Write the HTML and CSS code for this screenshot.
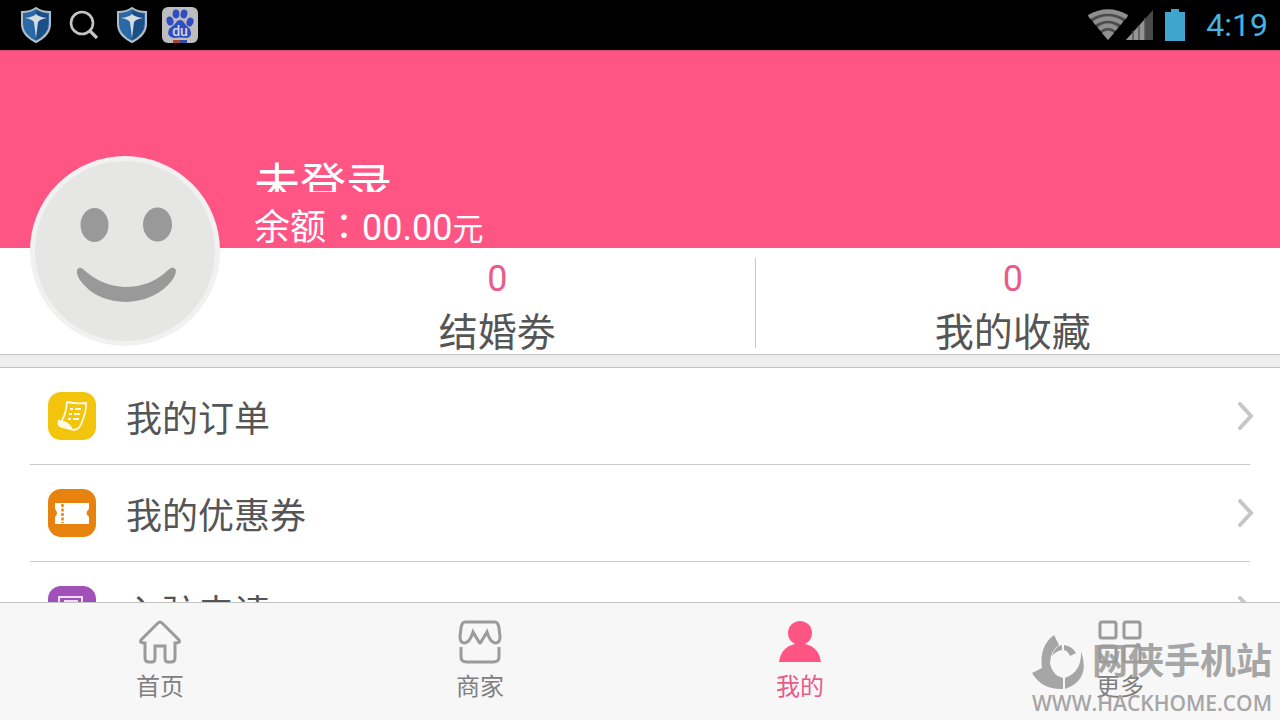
FILE: index.html
```html
<!DOCTYPE html>
<html lang="zh-CN">
  <head>
    <meta charset="UTF-8" />
    <meta name="viewport" content="width=device-width, initial-scale=1.0" />
    <title>我的</title>
    <link rel="stylesheet" href="styles.css">
  </head>
  <body>
    <svg class="defs" width="0" height="0" aria-hidden="true">
      <symbol id="shield" viewBox="0 0 30 36">
        <path d="M15 1 Q21 5 29 5 V17 Q29 28 15 35 Q1 28 1 17 V5 Q9 5 15 1Z" fill="#2a69a8" stroke="#b5bdc4" stroke-width="2" />
        <path d="M15 3 Q20 6 27 7 V17 Q27 27 15 33Z" fill="#1c4f88" />
        <path d="M4 11 Q12 10 15 7 Q18 10 26 11 Q19 12 17 15 L15 31 L13 15 Q11 12 4 11Z" fill="#d5dce2" />
      </symbol>
      <symbol id="arrow" viewBox="0 0 16 28">
        <path d="M2 2 L13 14 L2 26" fill="none" stroke="#c6c6c6" stroke-width="4" stroke-linecap="round" />
      </symbol>
    </svg>

    <header class="status">
      <div class="status-left">
        <svg width="30" height="36"><use href="#shield" /></svg>
        <svg width="30" height="30" viewBox="0 0 30 30" fill="none" stroke="#c4c4c4">
          <circle cx="13" cy="13" r="11" stroke-width="2.6" />
          <path d="M20 20 L28 28" stroke-width="3.2" />
        </svg>
        <svg width="30" height="36"><use href="#shield" /></svg>
        <svg width="36" height="36" viewBox="0 0 36 36">
          <rect width="36" height="36" rx="6" fill="#bdbdbf" />
          <g fill="#2f4fc0">
            <ellipse cx="8" cy="14" rx="3.4" ry="4.6" transform="rotate(-15 8 14)" />
            <ellipse cx="14" cy="7" rx="3.4" ry="4.4" />
            <ellipse cx="22" cy="7" rx="3.4" ry="4.4" transform="rotate(12 22 7)" />
            <ellipse cx="28" cy="15" rx="3.4" ry="4.4" transform="rotate(20 28 15)" />
            <path d="M18 13 Q21 13 23 17 L28 22 Q31 30 25 31 Q18 30 12 31 Q4 30 7 22 L13 17 Q15 13 18 13Z" />
          </g>
          <text class="paw-text" x="18" y="29" text-anchor="middle">du</text>
          <path d="M11 33 H18 V36 H11Z" fill="#b33c35" />
          <path d="M18 33 H25 V36 H18Z" fill="#2f4fa0" />
        </svg>
      </div>
      <div class="status-right">
        <svg width="66" height="32" viewBox="0 0 66 32">
          <path d="M0 7 Q20 -5 40 7 L20 31Z" fill="#4c4c4c" />
          <g fill="none" stroke="#8f8f8f" stroke-width="4.4">
            <path d="M1 8 Q20 -3 39 8" />
            <path d="M6 14 Q20 5 34 14" />
            <path d="M11 20 Q20 13 29 20" />
          </g>
          <path d="M14 24 Q20 19 26 24 L20 31Z" fill="#8f8f8f" />
          <path d="M38 31 L65 1 V31Z" fill="#4a4a4a" />
          <path d="M38 31 L57 10 V31Z" fill="#959595" />
          <path d="M45 22 V31 M51 16 V31 M57 9 V31" stroke="#555" stroke-width="1.5" />
        </svg>
        <svg width="22" height="32" viewBox="0 0 22 32">
          <path d="M7 0 H15 V3 H21 V32 H1 V3 H7Z" fill="#3fa5cf" />
        </svg>
        <time>4:19</time>
      </div>
    </header>

    <main>
      <section class="profile">
        <div class="hero">
          <h1>未登录</h1>
          <p>余额<span lang="zh-TW">：</span>00.00<small>元</small></p>
        </div>
        <svg class="avatar" viewBox="0 0 190 190">
          <circle cx="95" cy="95" r="92.5" fill="#e6e6e5" stroke="#f1f1f1" stroke-width="5" />
          <ellipse cx="64.5" cy="69" rx="14" ry="17" fill="#999" />
          <ellipse cx="127.5" cy="68.5" rx="14.5" ry="17" fill="#999" />
          <path d="M47 114 Q49 110 53 113 Q71 130 95 131 Q121 131 138 114 Q143 109 146 114 Q146 121 138 129 Q122 145 96 146 Q69 145 55 130 Q46 121 47 114Z" fill="#999" />
        </svg>
        <div class="stats">
          <a href="#"><span>0</span>结婚劵</a>
          <a href="#"><span>0</span>我的收藏</a>
        </div>
      </section>

      <ul class="menu">
        <li>
          <a href="#">
            <svg width="48" height="48" viewBox="0 0 48 48">
              <rect width="48" height="48" rx="13" fill="#f3c40c" />
              <g fill="none" stroke="#fffbe5" stroke-width="1.8">
                <path d="M14 28 Q18 22 19 10 Q28 12 38 11 Q39 17 34 30 Q31 38 26 38 L14 35 Q9 33 11 29 Q20 30 23 36 Q24 39 28 37" />
                <path d="M22 17 H25 M27 17 H33 M21 22 H24 M26 22 H32 M20 27 H23 M25 27 H31" />
              </g>
              <path d="M10 28 Q19 29 23 35 L22 37 L14 35 Q9 33 10 28Z" fill="#fffbe5" />
            </svg>
            <span>我的订单</span>
            <svg width="16" height="28"><use href="#arrow" /></svg>
          </a>
        </li>
        <li>
          <a href="#">
            <svg width="48" height="48" viewBox="0 0 48 48">
              <rect width="48" height="48" rx="13" fill="#e8820f" />
              <path d="M7 14 H41 V20 Q36 24 41 28 V35 H7 V28 Q11 24 7 20Z" fill="#fff" />
              <path d="M14.5 15 V34" stroke="#e8820f" stroke-width="2.5" stroke-dasharray="3 1.5" />
            </svg>
            <span>我的优惠券</span>
            <svg width="16" height="28"><use href="#arrow" /></svg>
          </a>
        </li>
        <li>
          <a href="#">
            <svg width="48" height="48" viewBox="0 0 48 48">
              <rect width="48" height="48" rx="13" fill="#a050b8" />
              <path d="M11 36 V11 H34 V36Z M17 20 V15 H29 V20" fill="none" stroke="#f0dcf5" stroke-width="2" />
            </svg>
            <span>入驻申请</span>
            <svg width="16" height="28"><use href="#arrow" /></svg>
          </a>
        </li>
      </ul>
    </main>

    <nav class="tabs">
      <a href="#">
        <svg width="44" height="44" viewBox="0 0 44 44">
          <path d="M20 3 Q22 1 24 3 L41 20 Q43 23 37 23 V38 Q37 42 33 42 H30 Q27 42 27 38 V26 H17 V38 Q17 42 14 42 H11 Q7 42 7 38 V23 Q1 23 3 20Z" />
        </svg>
        首页
      </a>
      <a href="#">
        <svg width="44" height="44" viewBox="0 0 44 44">
          <path d="M7 2 H37 Q40 2 41 8 L42 17 Q42 23 37 23 Q32 22 29 12 L23 22 Q22 24 21 22 L15 12 Q12 22 7 23 Q2 23 2 17 L3 8 Q4 2 7 2Z M3 27 V37 Q3 42 9 42 H35 Q41 42 41 37 V27" />
        </svg>
        商家
      </a>
      <a class="active" href="#">
        <svg width="44" height="44" viewBox="0 0 44 44">
          <circle cx="22" cy="13" r="12" />
          <path d="M1 42 Q3 27 17 24 H27 Q41 27 43 42Z" />
        </svg>
        我的
      </a>
      <a href="#">
        <svg width="44" height="44" viewBox="0 0 44 44">
          <rect x="2" y="2" width="16" height="16" rx="2" />
          <rect x="26" y="2" width="16" height="16" rx="2" />
          <rect x="2" y="26" width="16" height="16" rx="2" />
          <rect x="26" y="26" width="16" height="16" rx="2" />
        </svg>
        更多
      </a>
    </nav>

    <div class="watermark">
      <div class="brand">
        <svg width="52" height="56" viewBox="0 0 52 56">
          <path d="M22 1 L27 11 Q18 17 18 30 Q21 42 31 44 V55 Q10 56 0 39 L10 34 Q7 12 22 1Z" />
          <path d="M33 44 Q50 38 49 17 Q59 46 33 55Z" />
          <path d="M20 22 Q23 12 30 11 V16 Q24 17 20 22Z M32 11 Q40 12 44 19 L38 22 Q36 17 32 16Z" />
        </svg>
        <strong>网侠手机站</strong>
      </div>
      <div class="site">WWW.HACKHOME.COM</div>
    </div>
  </body>
</html>
```

FILE: styles.css
```css
* {
  box-sizing: border-box;
}
body {
  margin: 0;
  height: 100vh;
  display: flex;
  flex-direction: column;
  overflow: hidden;
  position: relative;
  background-color: white;
  color: #555;
  font-family: Roboto, "Noto Sans CJK SC", sans-serif;
}
a {
  color: inherit;
  text-decoration: none;
}
svg {
  display: block;
  flex-shrink: 0;
}
.defs {
  position: absolute;
}

/* status bar */
.status {
  height: 50px;
  flex-shrink: 0;
  display: flex;
  align-items: center;
  justify-content: space-between;
  padding: 0 12px 0 21px;
  background-color: black;
}
.status-left {
  display: flex;
  align-items: center;
  gap: 18px;
}
.status-left svg:last-child {
  margin-left: -3px;
}
.status-right {
  display: flex;
  align-items: center;
  gap: 10px;
}
.status time {
  margin-left: 10px;
  font-size: 32px;
  color: #45b3e0;
}
.paw-text {
  font-size: 14px;
  font-weight: 500;
  fill: #d5d8e6;
}

/* profile */
main {
  flex: 1;
  min-height: 0;
  overflow: hidden;
}
.profile {
  position: relative;
}
.hero {
  height: 198px;
  padding: 105px 0 0 254px;
  background-color: #ff5585;
  border-top: 1px solid #d84a72;
  color: white;
}
.hero h1 {
  margin: 0;
  height: 36px;
  overflow: hidden;
  font-size: 46px;
  font-weight: normal;
  line-height: 58px;
}
.hero p {
  margin: 14px 0 0;
  font-size: 36px;
  line-height: 44px;
}
.hero small {
  font-size: 31px;
}
.avatar {
  position: absolute;
  left: 30px;
  bottom: 9px;
  width: 190px;
  height: 190px;
}
.stats {
  display: flex;
  padding: 10px 10px 6px 240px;
  border-bottom: 1px solid #c4c4c4;
}
.stats a {
  flex: 1;
  height: 90px;
  text-align: center;
  font-size: 39px;
  line-height: 66px;
}
.stats a + a {
  border-left: 1px solid #c8c8c8;
}
.stats span {
  display: block;
  font-size: 36px;
  line-height: 42px;
  color: #e85b8a;
}

/* menu */
.menu {
  margin: 0;
  padding: 0 30px;
  list-style: none;
  border-top: 13px solid #eee;
  position: relative;
}
.menu::before {
  content: "";
  position: absolute;
  top: -1px;
  left: 0;
  right: 0;
  height: 1px;
  background-color: #c4c4c4;
}
.menu li {
  border-bottom: 1px solid #c8c8c8;
}
.menu a {
  height: 96px;
  display: flex;
  align-items: center;
  padding-left: 18px;
  margin-right: -4px;
}
.menu span {
  flex: 1;
  padding-left: 30px;
  font-size: 36px;
}

/* bottom tabs */
.tabs {
  height: 118px;
  flex-shrink: 0;
  display: flex;
  border-top: 1px solid #c4c4c4;
  background-color: #f7f7f7;
}
.tabs a {
  flex: 1;
  display: flex;
  flex-direction: column;
  align-items: center;
  padding-top: 17px;
  gap: 6px;
  font-size: 24px;
  line-height: 34px;
  color: #808080;
}
.tabs svg {
  fill: none;
  stroke: #9b9b9b;
  stroke-width: 3;
}
.tabs .active {
  color: #e85b8a;
}
.tabs .active svg {
  fill: #ff5585;
  stroke: none;
}

/* watermark over the bottom corner */
.watermark {
  position: absolute;
  right: 8px;
  bottom: 4px;
  color: #999;
  opacity: 0.85;
  pointer-events: none;
}
.brand {
  display: flex;
  align-items: center;
  justify-content: space-between;
}
.brand svg {
  fill: #999;
}
.brand strong {
  font-size: 36px;
  line-height: 56px;
}
.site {
  font-family: "Open Sans", sans-serif;
  font-size: 21px;
  font-weight: 600;
  line-height: 26px;
}
```
